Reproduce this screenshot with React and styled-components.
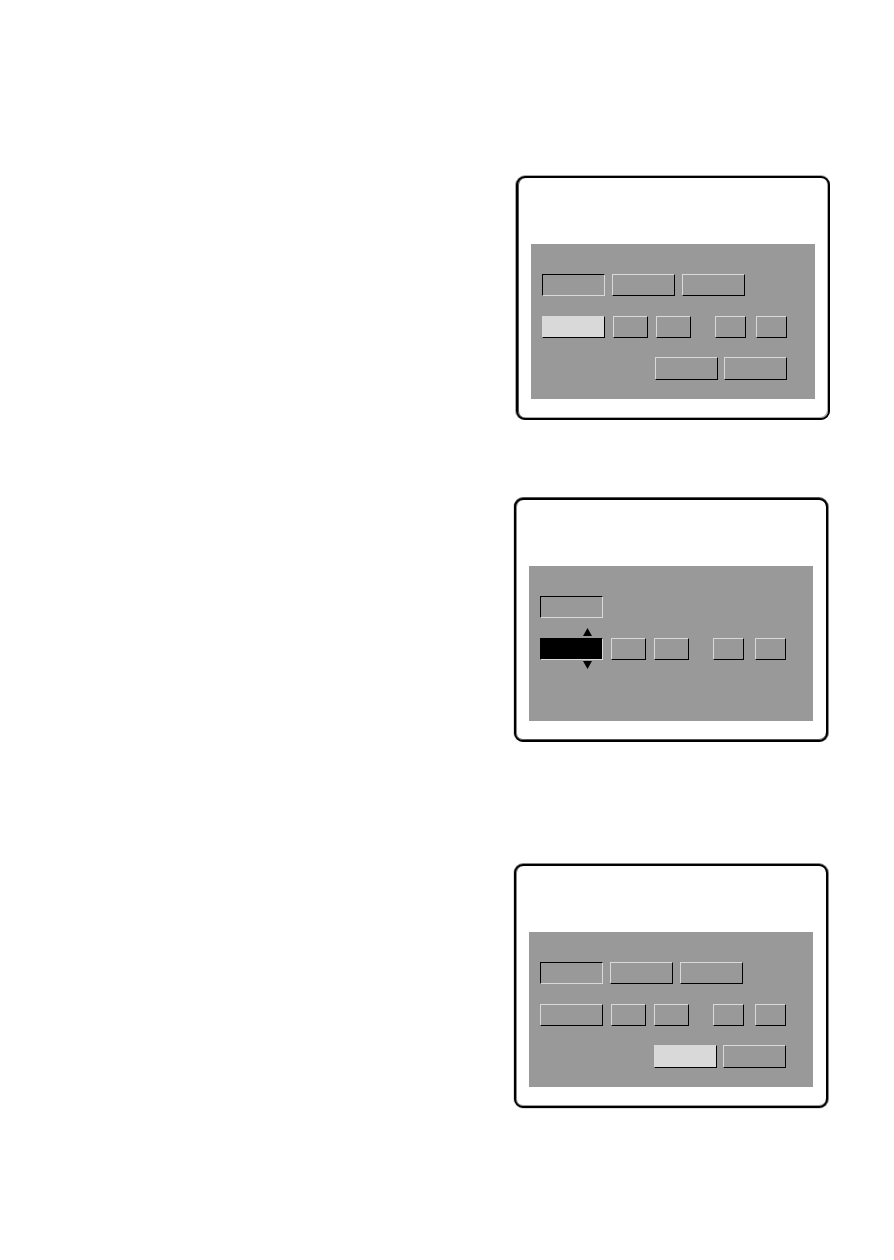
import styled, { createGlobalStyle, css } from 'styled-components';

const GlobalStyle = createGlobalStyle`
	* {
		box-sizing: border-box;
	}

	body {
		margin: 0;
		background-color: #fff;
		font-family: 'Liberation Sans', Arial, sans-serif;
	}
`;

const light = '#d9d9d9';

const Page = styled.main`
	min-height: 100vh;
	padding: 176px 64px 152px;
	display: flex;
	flex-direction: column;
	align-items: flex-end;
	gap: 78px;
`;

const Steps = styled.div`
	width: 100%;
	padding-right: 2px;
	display: flex;
	flex-direction: column;
	align-items: flex-end;
	gap: 122px;
`;

const Screen = styled.section`
	width: 100%;
	max-width: 314px;
	padding: 66px 13px 19px;
	border: 2px solid #000;
	border-radius: 9px;
	background-color: #fff;
	box-shadow: ${({ $soft }) => $soft};
`;

const Panel = styled.div`
	min-height: 155px;
	padding: 30px ${({ $inset }) => $inset || 27}px 19px 11px;
	background-color: #999;
	display: flex;
	flex-direction: column;
`;

const Row = styled.div`
	display: flex;
	justify-content: ${({ $justify }) => $justify || 'flex-start'};
	gap: ${({ $gap }) => $gap}px;

	& + & {
		margin-top: 20px;
	}
`;

const Actions = styled.div`
	margin-top: 19px;
	display: flex;
	justify-content: flex-end;
	gap: 6px;
`;

const Group = styled.div`
	display: flex;
	gap: ${({ $gap }) => $gap}px;
`;

const looks = {
	raised: css`
		border-color: ${light} #000 #000 ${light};
		background-color: transparent;
	`,
	pressed: css`
		border-color: #000 ${light} ${light} #000;
		background-color: transparent;
	`,
	selected: css`
		border-color: ${light} #000 #000 ${light};
		background-color: ${light};
	`,
	editing: css`
		border-color: #000 ${light} ${light} #000;
		background-color: #000;
	`,
};

const Button = styled.button`
	flex: none;
	width: ${({ $width }) => $width || 63}px;
	height: ${({ $height }) => $height || 22}px;
	padding: 0;
	border: 1px solid;
	border-radius: 0;
	${({ $look }) => looks[$look || 'raised']}
`;

const Spinner = styled.div`
	position: relative;
	display: flex;
`;

const Arrow = styled.svg`
	position: absolute;
	right: 11px;
	width: 9px;
	height: 8px;
	${({ $down }) => ($down ? 'top: 23px;' : 'bottom: 24px;')}
`;

const Fields = ({ look, timeGap = 11 }) => (
	<Row $justify="space-between">
		<Group $gap={8}>
			<Spinner>
				<Button type="button" aria-label="Year" $look={look} />
				{look === 'editing' && (
					<>
						<Arrow viewBox="0 0 9 8" aria-hidden="true">
							<path d="M4.5 0 9 8H0Z" />
						</Arrow>
						<Arrow $down viewBox="0 0 9 8" aria-hidden="true">
							<path d="M0 0H9L4.5 8Z" />
						</Arrow>
					</>
				)}
			</Spinner>
			<Button type="button" aria-label="Month" $width={35} />
			<Button type="button" aria-label="Day" $width={35} />
		</Group>
		<Group $gap={timeGap}>
			<Button type="button" aria-label="Hour" $width={31} />
			<Button type="button" aria-label="Minute" $width={31} />
		</Group>
	</Row>
);

const Tabs = () => (
	<Row $gap={7}>
		<Button type="button" aria-label="First tab" $look="pressed" />
		<Button type="button" aria-label="Second tab" />
		<Button type="button" aria-label="Third tab" />
	</Row>
);

const Confirm = ({ look }) => (
	<Actions>
		<Button type="button" aria-label="Set" $height={23} $look={look} />
		<Button type="button" aria-label="Cancel" $height={23} />
	</Actions>
);

const App = () => (
	<>
		<GlobalStyle />
		<Page>
			<Screen $soft="0 -1px 0 #aaa, -1px 0 0 #aaa, inset 1px 0 0 #555, inset -1px -1px 0 #aaa">
				<Panel $inset={28}>
					<Tabs />
					<Fields look="selected" timeGap={10} />
					<Confirm />
				</Panel>
			</Screen>
			<Steps>
				<Screen $soft="0 -1px 0 #555, 1px 0 0 #888, -1px 0 0 #ddd, inset 1px 0 0 #888, inset 0 -1px 0 #555">
					<Panel>
						<Row>
							<Button type="button" aria-label="Mode" $look="pressed" />
						</Row>
						<Fields look="editing" />
					</Panel>
				</Screen>
				<Screen $soft="0 -1px 0 #888, 1px 0 0 #888, -1px 0 0 #ddd, 0 1px 0 #ddd, inset 1px 0 0 #888, inset 0 -1px 0 #999">
					<Panel>
						<Tabs />
						<Fields />
						<Confirm look="selected" />
					</Panel>
				</Screen>
			</Steps>
		</Page>
	</>
);

export default App;
